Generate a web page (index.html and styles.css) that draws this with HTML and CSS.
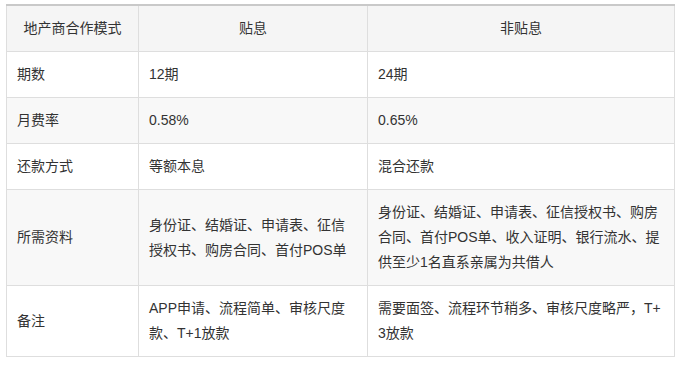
FILE: index.html
```html
<!DOCTYPE html>
<html lang="zh-CN">
<head>
    <meta charset="UTF-8">
    <meta name="viewport" content="width=device-width, initial-scale=1.0">
    <title>地产商合作模式</title>
    <link rel="stylesheet" href="styles.css">
</head>
<body>
    <div class="wrap">
        <table class="compare">
            <thead>
                <tr>
                    <th class="col-name">地产商合作模式</th>
                    <th class="col-a">贴息</th>
                    <th class="col-b">非贴息</th>
                </tr>
            </thead>
            <tbody>
                <tr>
                    <td>期数</td>
                    <td>12期</td>
                    <td>24期</td>
                </tr>
                <tr>
                    <td>月费率</td>
                    <td>0.58%</td>
                    <td>0.65%</td>
                </tr>
                <tr>
                    <td>还款方式</td>
                    <td>等额本息</td>
                    <td>混合还款</td>
                </tr>
                <tr>
                    <td>所需资料</td>
                    <td>身份证、结婚证、申请表、征信授权书、购房合同、首付POS单</td>
                    <td>身份证、结婚证、申请表、征信授权书、购房合同、首付POS单、收入证明、银行流水、提供至少1名直系亲属为共借人</td>
                </tr>
                <tr>
                    <td>备注</td>
                    <td>APP申请、流程简单、审核尺度款、T+1放款</td>
                    <td>需要面签、流程环节稍多、审核尺度略严，T+3放款</td>
                </tr>
            </tbody>
        </table>
    </div>
</body>
</html>
```

FILE: styles.css
```css
body {
    margin: 0;
    background: #fff;
    font-family: "Liberation Sans", "Noto Sans CJK SC", sans-serif;
    font-size: 14px;
    color: #333;
}
.wrap {
    padding: 4px 6px 0 6px;
}
.compare {
    width: 669px;
    border-collapse: collapse;
    table-layout: fixed;
    border-top: 2px solid #c9c9c9;
}
.col-name {
    width: 111px;
}
.col-a {
    width: 208px;
}
.compare th,
.compare td {
    border: 1px solid #dedede;
    padding: 10px 10px 10px 10px;
    line-height: 25px;
    word-break: break-all;
    vertical-align: middle;
}
.compare th {
    font-weight: normal;
    text-align: center;
    background-color: #f5f5f5;
}
.compare td {
    text-align: left;
}
.compare tbody tr:nth-child(even) td {
    background-color: #f8f8f8;
}
```
